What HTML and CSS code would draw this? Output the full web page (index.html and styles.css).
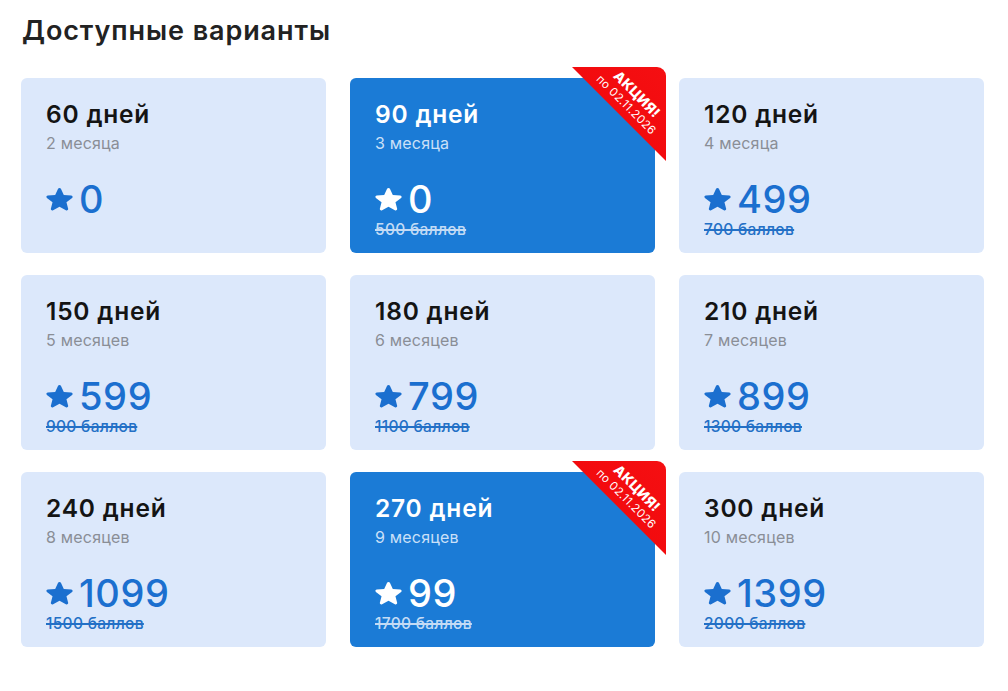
FILE: index.html
```html
<!DOCTYPE html>
<html lang="ru">
<head>
<meta charset="utf-8">
<title>Доступные варианты</title>
<link rel="stylesheet" href="styles.css">
</head>
<body>
<main class="page">
  <h1 class="heading">Доступные варианты</h1>
  <div class="grid">
    <div class="card">
      <div class="days">60 дней</div>
      <div class="months">2 месяца</div>
      <div class="price"><svg class="star" viewBox="3.2 2.1 17.6 19" preserveAspectRatio="none"><path d="M12 17.27l4.15 2.51c.76.46 1.69-.22 1.49-1.08l-1.1-4.72 3.67-3.18c.67-.58.31-1.68-.57-1.75l-4.83-.41-1.89-4.46c-.34-.81-1.5-.81-1.84 0L9.19 8.63l-4.83.41c-.88.07-1.24 1.17-.57 1.75l3.67 3.18-1.1 4.72c-.2.86.73 1.54 1.49 1.08l4.15-2.5z"/></svg><span>0</span></div>
    </div>
    <div class="card card-promo">
      <div class="days">90 дней</div>
      <div class="months">3 месяца</div>
      <div class="price"><svg class="star" viewBox="3.2 2.1 17.6 19" preserveAspectRatio="none"><path d="M12 17.27l4.15 2.51c.76.46 1.69-.22 1.49-1.08l-1.1-4.72 3.67-3.18c.67-.58.31-1.68-.57-1.75l-4.83-.41-1.89-4.46c-.34-.81-1.5-.81-1.84 0L9.19 8.63l-4.83.41c-.88.07-1.24 1.17-.57 1.75l3.67 3.18-1.1 4.72c-.2.86.73 1.54 1.49 1.08l4.15-2.5z"/></svg><span>0</span></div>
      <div class="old">500 баллов</div>
      <div class="ribbon"><div class="ribbon-text"><div class="r1">АКЦИЯ!</div><div class="r2">по 02.11.2026</div></div></div>
    </div>
    <div class="card">
      <div class="days">120 дней</div>
      <div class="months">4 месяца</div>
      <div class="price"><svg class="star" viewBox="3.2 2.1 17.6 19" preserveAspectRatio="none"><path d="M12 17.27l4.15 2.51c.76.46 1.69-.22 1.49-1.08l-1.1-4.72 3.67-3.18c.67-.58.31-1.68-.57-1.75l-4.83-.41-1.89-4.46c-.34-.81-1.5-.81-1.84 0L9.19 8.63l-4.83.41c-.88.07-1.24 1.17-.57 1.75l3.67 3.18-1.1 4.72c-.2.86.73 1.54 1.49 1.08l4.15-2.5z"/></svg><span>499</span></div>
      <div class="old">700 баллов</div>
    </div>
    <div class="card">
      <div class="days">150 дней</div>
      <div class="months">5 месяцев</div>
      <div class="price"><svg class="star" viewBox="3.2 2.1 17.6 19" preserveAspectRatio="none"><path d="M12 17.27l4.15 2.51c.76.46 1.69-.22 1.49-1.08l-1.1-4.72 3.67-3.18c.67-.58.31-1.68-.57-1.75l-4.83-.41-1.89-4.46c-.34-.81-1.5-.81-1.84 0L9.19 8.63l-4.83.41c-.88.07-1.24 1.17-.57 1.75l3.67 3.18-1.1 4.72c-.2.86.73 1.54 1.49 1.08l4.15-2.5z"/></svg><span>599</span></div>
      <div class="old">900 баллов</div>
    </div>
    <div class="card">
      <div class="days">180 дней</div>
      <div class="months">6 месяцев</div>
      <div class="price"><svg class="star" viewBox="3.2 2.1 17.6 19" preserveAspectRatio="none"><path d="M12 17.27l4.15 2.51c.76.46 1.69-.22 1.49-1.08l-1.1-4.72 3.67-3.18c.67-.58.31-1.68-.57-1.75l-4.83-.41-1.89-4.46c-.34-.81-1.5-.81-1.84 0L9.19 8.63l-4.83.41c-.88.07-1.24 1.17-.57 1.75l3.67 3.18-1.1 4.72c-.2.86.73 1.54 1.49 1.08l4.15-2.5z"/></svg><span>799</span></div>
      <div class="old">1100 баллов</div>
    </div>
    <div class="card">
      <div class="days">210 дней</div>
      <div class="months">7 месяцев</div>
      <div class="price"><svg class="star" viewBox="3.2 2.1 17.6 19" preserveAspectRatio="none"><path d="M12 17.27l4.15 2.51c.76.46 1.69-.22 1.49-1.08l-1.1-4.72 3.67-3.18c.67-.58.31-1.68-.57-1.75l-4.83-.41-1.89-4.46c-.34-.81-1.5-.81-1.84 0L9.19 8.63l-4.83.41c-.88.07-1.24 1.17-.57 1.75l3.67 3.18-1.1 4.72c-.2.86.73 1.54 1.49 1.08l4.15-2.5z"/></svg><span>899</span></div>
      <div class="old">1300 баллов</div>
    </div>
    <div class="card">
      <div class="days">240 дней</div>
      <div class="months">8 месяцев</div>
      <div class="price"><svg class="star" viewBox="3.2 2.1 17.6 19" preserveAspectRatio="none"><path d="M12 17.27l4.15 2.51c.76.46 1.69-.22 1.49-1.08l-1.1-4.72 3.67-3.18c.67-.58.31-1.68-.57-1.75l-4.83-.41-1.89-4.46c-.34-.81-1.5-.81-1.84 0L9.19 8.63l-4.83.41c-.88.07-1.24 1.17-.57 1.75l3.67 3.18-1.1 4.72c-.2.86.73 1.54 1.49 1.08l4.15-2.5z"/></svg><span>1099</span></div>
      <div class="old">1500 баллов</div>
    </div>
    <div class="card card-promo">
      <div class="days">270 дней</div>
      <div class="months">9 месяцев</div>
      <div class="price"><svg class="star" viewBox="3.2 2.1 17.6 19" preserveAspectRatio="none"><path d="M12 17.27l4.15 2.51c.76.46 1.69-.22 1.49-1.08l-1.1-4.72 3.67-3.18c.67-.58.31-1.68-.57-1.75l-4.83-.41-1.89-4.46c-.34-.81-1.5-.81-1.84 0L9.19 8.63l-4.83.41c-.88.07-1.24 1.17-.57 1.75l3.67 3.18-1.1 4.72c-.2.86.73 1.54 1.49 1.08l4.15-2.5z"/></svg><span>99</span></div>
      <div class="old">1700 баллов</div>
      <div class="ribbon"><div class="ribbon-text"><div class="r1">АКЦИЯ!</div><div class="r2">по 02.11.2026</div></div></div>
    </div>
    <div class="card">
      <div class="days">300 дней</div>
      <div class="months">10 месяцев</div>
      <div class="price"><svg class="star" viewBox="3.2 2.1 17.6 19" preserveAspectRatio="none"><path d="M12 17.27l4.15 2.51c.76.46 1.69-.22 1.49-1.08l-1.1-4.72 3.67-3.18c.67-.58.31-1.68-.57-1.75l-4.83-.41-1.89-4.46c-.34-.81-1.5-.81-1.84 0L9.19 8.63l-4.83.41c-.88.07-1.24 1.17-.57 1.75l3.67 3.18-1.1 4.72c-.2.86.73 1.54 1.49 1.08l4.15-2.5z"/></svg><span>1399</span></div>
      <div class="old">2000 баллов</div>
    </div>
  </div>
</main>
</body>
</html>
```

FILE: styles.css
```css
* { box-sizing: border-box; }
html, body { margin: 0; padding: 0; background: #ffffff; }
body {
  font-family: Inter, "Noto Sans", "Liberation Sans", sans-serif;
  color: #141414;
}
.page {
  padding: 15px 21px 0 21px;
}
.heading {
  margin: 0 0 31px 1px;
  font-size: 27px;
  line-height: 32px;
  font-weight: 600;
  color: #222222;
  letter-spacing: 0.9px;
}
.grid {
  display: grid;
  grid-template-columns: repeat(3, 305px);
  grid-auto-rows: 175px;
  column-gap: 24px;
  row-gap: 22px;
}
.card {
  position: relative;
  display: flex;
  flex-direction: column;
  align-items: flex-start;
  padding: 22px 23px 14px 25px;
  background: #dce8fb;
  border-radius: 6px;
}
.days {
  font-size: 24.5px;
  line-height: 29px;
  font-weight: 600;
  color: #141414;
  letter-spacing: 0.8px;
}
.months {
  margin-top: 5px;
  font-size: 16px;
  line-height: 19px;
  color: #8a8e96;
  letter-spacing: 0.2px;
}
.price {
  margin-top: 24px;
  display: flex;
  align-items: center;
  gap: 6px;
  font-size: 38px;
  line-height: 44px;
  font-weight: 500;
  color: #1b6fcf;
  letter-spacing: 0.6px;
}
.star {
  width: 27px;
  height: 26px;
  fill: #1b6fcf;
  flex: none;
}
.old {
  font-size: 15.5px;
  line-height: 18px;
  font-weight: 500;
  color: #2370c6;
  letter-spacing: 0.3px;
  text-decoration: line-through;
  text-decoration-thickness: 1.5px;
}
.card-promo {
  background: #1b7bd6;
}
.card-promo .days { color: #ffffff; }
.card-promo .months { color: #cbe0f8; }
.card-promo .price { color: #ffffff; }
.card-promo .star { fill: #ffffff; }
.card-promo .old { color: #c3dbf5; }

.ribbon {
  position: absolute;
  top: -11px;
  right: -11px;
  width: 94px;
  height: 94px;
  background: linear-gradient(225deg, #f50f12 0%, #f20a0d 60%, #d80008 100%);
  clip-path: polygon(0 0, 100% 0, 100% 100%);
  border-top-right-radius: 9px;
  overflow: hidden;
}
.ribbon-text {
  position: absolute;
  left: 0;
  top: 17px;
  width: 120px;
  text-align: center;
  color: #ffffff;
  transform: rotate(45deg);
  transform-origin: 60px 15px;
}
.r1 {
  font-size: 14px;
  line-height: 16px;
  font-weight: 800;
  letter-spacing: 0.3px;
}
.r2 {
  font-size: 11.5px;
  line-height: 14px;
  font-weight: 400;
  letter-spacing: 0.3px;
}
```
